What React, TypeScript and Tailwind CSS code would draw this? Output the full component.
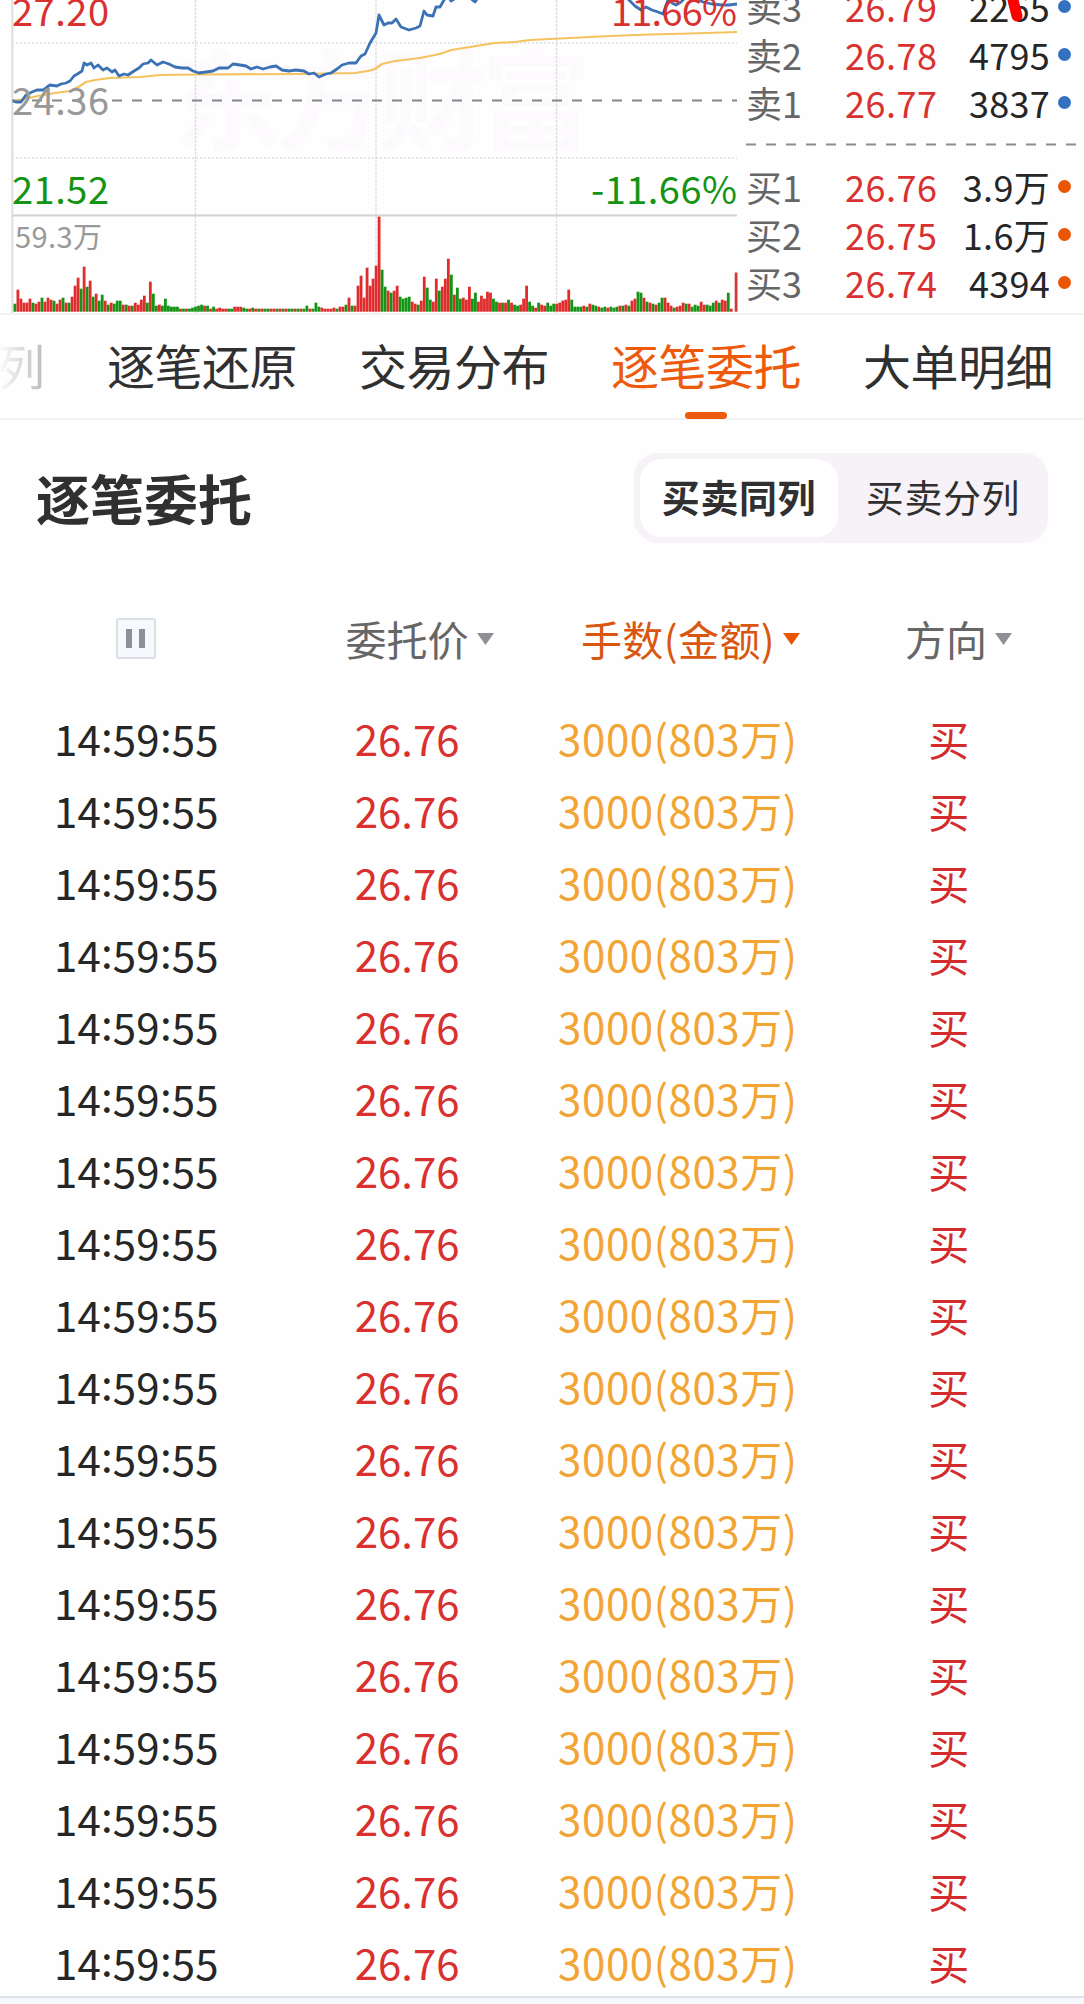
import { Fragment, useState } from 'react'
import clsx from 'clsx'

type Level = { label: string; price: string; volume: string }

const asks: Level[] = [
  { label: '卖3', price: '26.79', volume: '2265' },
  { label: '卖2', price: '26.78', volume: '4795' },
  { label: '卖1', price: '26.77', volume: '3837' },
]

const bids: Level[] = [
  { label: '买1', price: '26.76', volume: '3.9万' },
  { label: '买2', price: '26.75', volume: '1.6万' },
  { label: '买3', price: '26.74', volume: '4394' },
]

const tabs = ['逐笔还原', '交易分布', '逐笔委托', '大单明细']

const orders = Array.from({ length: 18 }, () => ({
  time: '14:59:55',
  price: '26.76',
  amount: '3000(803万)',
  side: '买',
}))

// one bar per minute, colour letter + height
const volumes = (
  'g8 r22 r13 r9 r9 r13 g9 r8 r10 g14 r10 r14 r12 g11 r8 r12 g14 r9 g9 r15 r26 r34 g23 r45 g25 r31 g15 r18 g11 g17 ' +
  'r11 g7 r9 g8 g11 g11 r7 g7 r6 g6 r9 r7 r12 r16 g9 r30 g18 g6 r7 g6 g13 g6 g5 g5 g5 r3 g3 r3 g3 g4 ' +
  'g5 g6 g7 r6 g6 r3 g5 r3 r4 r3 r3 g3 g3 r5 r5 r5 g4 g3 r3 g4 r3 g3 r3 g3 g3 r3 r3 g3 r3 g3 ' +
  'r3 g3 g3 r3 g3 r3 g3 g6 r3 g3 g9 g5 r4 r3 r3 r3 r4 g3 r5 r5 g7 r14 g6 r6 r26 r36 r14 r44 r26 r33 ' +
  'r46 r95 g42 g25 r21 g19 r21 r26 g15 g13 g14 g15 r10 r8 g7 r11 r35 g24 g12 r10 r33 g21 r25 r33 r53 g37 r17 g24 g13 r14 ' +
  'r12 r25 g13 g19 r10 r16 r13 r20 r19 g13 g10 r9 g9 r9 g12 r9 g7 g6 r7 r13 r26 g10 g6 r4 g9 r7 r6 g9 g6 g8 ' +
  'r8 r9 r11 r12 r22 g12 g5 g5 g5 r6 g5 r8 g7 g6 r5 g4 g5 r4 g5 g4 g5 r6 g6 r7 g6 r11 r13 g20 ' +
  'g19 r14 g10 r9 g8 r7 g9 g14 r14 r9 r6 g4 r5 r6 r9 g8 r8 g5 g7 g6 r10 r7 g7 g6 g9 r11 g9 r12 r11 g19 r3'
).split(' ')

const priceLine =
  '13,101 16,102 21,102 26,95 32,92 37,90 43,90 47,87 50,85 57,86 61,84 66,83 70,81 74,76 79,73 82,71 84,63 87,65 91,63 94,68 98,65 103,70 107,68 112,72 115,70 119,76 124,74 128,75 134,71 139,68 143,64 148,63 151,60 157,65 163,62 169,64 175,67 182,68 188,68 193,71 199,73 206,72 213,71 219,68 228,68 233,64 240,65 246,66 251,69 257,67 263,69 270,67 276,66 282,70 289,71 296,70 304,71 309,74 314,73 319,77 326,74 331,73 337,69 342,65 349,63 356,63 361,56 365,54 370,43 376,33 379,15 384,25 388,23 392,23 396,19 401,27 409,30 416,28 420,26 424,11 427,15 433,16 436,7 440,7 444,0 448,-4 451,1 456,-2 463,-3 470,-2 475,2 480,-5 560,-20 620,-8 629,0 635,6 641,10 646,7 652,10 658,12 663,14 668,0 672,3 676,5 681,2 686,-3 695,-2 703,2 712,4 722,5 729,5 737,4'

const averageLine =
  '13,101 24,99 38,96 55,93 70,91 80,86 86,82 95,80 110,78 140,77 160,75 200,74.5 300,74 355,73 368,71 375,69 382,64 395,61 420,58 435,55 443,53 451,50 470,47 495,43 515,42 530,40 570,38 610,36 650,34.5 690,33.5 737,32'

function PriceChart() {
  return (
    <svg width="744" height="313" viewBox="0 0 744 313" className="block shrink-0">
      <text x="172" y="142" fontSize="110" fontWeight="700" letterSpacing="-7" fill="#fdfafe">东方财富</text>
      <g stroke="#dedede" strokeWidth="1.3">
        <path d="M12 43H737M12 158H737" strokeDasharray="2 2" />
        <path d="M195.5 0V313M376 0V313M556.5 0V313" strokeDasharray="3 1" />
        <path d="M12.3 0V313" strokeWidth="2" />
        <path d="M12 215.5H737" stroke="#d2d2d2" strokeWidth="2" />
      </g>
      <path d="M12 100.4H737" stroke="#858585" strokeWidth="2" strokeDasharray="10 10" />
      <polyline points={averageLine} fill="none" stroke="#f4c35e" strokeWidth="2.2" strokeLinejoin="round" />
      <polyline points={priceLine} fill="none" stroke="#3a72b5" strokeWidth="2.8" strokeLinejoin="round" />
      {volumes.map((v, i) => {
        const h = Number(v.slice(1))
        return <rect key={i} x={13.5 + i * 3.01} y={311.7 - h} width="2.8" height={h} fill={v[0] === 'r' ? '#e02c2c' : '#149414'} />
      })}
      <rect x="734.7" y="272.5" width="2.8" height="39.2" fill="#d03a3a" />
      <g fontSize="38">
        <text x="12" y="26" fill="#d93030" textLength="97">27.20</text>
        <text x="12" y="115" fill="#999999" textLength="97">24.36</text>
        <text x="12" y="204" fill="#149414" textLength="97">21.52</text>
        <text x="611" y="26" fill="#d93030" textLength="126">11.66%</text>
        <text x="591" y="204" fill="#149414" textLength="146">-11.66%</text>
        <text x="15" y="248" fill="#999999" fontSize="29" textLength="87">59.3万</text>
      </g>
    </svg>
  )
}

function LevelRow({ level, dot }: { level: Level; dot: string }) {
  return (
    <div className="flex h-12 shrink-0 items-center pb-[2px] text-[36px] leading-[46px]">
      <span className="w-[99px] text-[#666]">{level.label}</span>
      <span className="w-[96px] tracking-[0.5px] text-[#d93030]">{level.price}</span>
      <span className="flex-1 text-right tracking-[0.3px] text-[#262626]">{level.volume}</span>
      <span className={clsx('ml-2 size-[13px] rounded-full', dot)} />
    </div>
  )
}

function OrderBook() {
  return (
    <div className="relative flex h-[313px] flex-1 flex-col justify-end overflow-hidden pr-[13px] pb-[6px] pl-[2px]">
      {asks.map((level) => (
        <LevelRow key={level.label} level={level} dot="bg-[#3272bf]" />
      ))}
      <svg width="331" height="36" className="shrink-0">
        <path d="M0 17.5H330" stroke="#8c8c8c" strokeWidth="2" strokeDasharray="10 10" />
      </svg>
      {bids.map((level) => (
        <LevelRow key={level.label} level={level} dot="bg-[#ea5504]" />
      ))}
      {/* hand-drawn mark over the third ask */}
      <svg width="40" height="24" className="absolute top-0 left-[256px]">
        <path d="M11 -8L17 16" stroke="#ff0000" strokeWidth="11" strokeLinecap="round" />
      </svg>
    </div>
  )
}

function Caret({ className }: { className: string }) {
  return (
    <svg width="17" height="12" viewBox="0 0 16 12" preserveAspectRatio="none" className={clsx('mt-px ml-2 shrink-0', className)}>
      <path d="M0 0H16L8 12Z" fill="currentColor" />
    </svg>
  )
}

function Time({ value }: { value: string }) {
  return (
    <span>
      {value.split(':').map((part, i) => (
        <Fragment key={i}>
          {i > 0 && <span className="relative -top-[4px]">:</span>}
          {part}
        </Fragment>
      ))}
    </span>
  )
}

function App() {
  const [tab, setTab] = useState('逐笔委托')
  const [view, setView] = useState('买卖同列')

  return (
    <div className="h-[2004px] w-[1084px] overflow-hidden bg-[#fefefe] font-['Noto_Sans_CJK_SC',sans-serif] text-[#303030]">
      <div className="flex h-[313px]">
        <PriceChart />
        <OrderBook />
      </div>

      <nav className="flex h-[107px] items-center border-y-2 border-[#f2f2f2] pb-[6px] text-[48px] leading-[60px] whitespace-nowrap">
        <span className="-ml-[3px] w-[110px] shrink-0 bg-linear-to-r from-white to-[#b8b8b8] to-45% bg-clip-text tracking-[-1px] text-transparent">列</span>
        {tabs.map((name) => (
          <button
            key={name}
            onClick={() => setTab(name)}
            className={clsx('relative mr-[62px] w-[190px] shrink-0 tracking-[-0.5px]', tab === name && 'text-[#ee5a0c]')}
          >
            {name}
            {tab === name && <span className="absolute -bottom-[25px] left-[74px] h-[7px] w-[42px] rounded-full bg-[#ee5a0c]" />}
          </button>
        ))}
      </nav>

      <div className="flex h-[155px] items-center justify-between pr-9 pl-9">
        <h1 className="text-[54px] leading-none font-bold">逐笔委托</h1>
        <div className="flex h-[90px] rounded-[24px] bg-[#f6f2f7] py-[6px] pl-[6px] text-[38px] tracking-[0.6px]">
          {['买卖同列', '买卖分列'].map((name, i) => (
            <button
              key={name}
              onClick={() => setView(name)}
              className={clsx('rounded-[22px] pb-1', i === 0 ? 'w-[198px]' : 'w-[210px]', view === name && 'bg-white font-bold')}
            >
              {name}
            </button>
          ))}
        </div>
      </div>

      <div className="grid h-[129px] grid-cols-4 items-center justify-items-center pb-[2px] text-[41px] text-[#666]">
        <button className="flex h-[41px] w-10 items-center justify-center gap-[7px] rounded-[3px] border-2 border-[#dcdee6] bg-[#f6f9fe]">
          <span className="h-[19px] w-[6px] bg-[#8e8f97]" />
          <span className="h-[19px] w-[6px] bg-[#8e8f97]" />
        </button>
        <span className="flex items-center pl-[26px]">委托价<Caret className="text-[#8e8f97]" /></span>
        <span className="flex items-center pl-[26px] tracking-[0.4px] text-[#d9560f]">手数(金额)<Caret className="text-[#ea5504]" /></span>
        <span className="flex items-center pl-5">方向<Caret className="text-[#8e8f97]" /></span>
      </div>

      <div className="h-[1292px] overflow-hidden text-[42px] leading-[67px]">
        {orders.map((order, i) => (
          <div key={i} className="grid h-[72px] grid-cols-4 justify-items-center pb-[5px] pl-px">
            <span className="tracking-[0.2px] text-[#262626]"><Time value={order.time} /></span>
            <span className="text-[#d93030]">{order.price}</span>
            <span className="tracking-[0.6px] text-[#f2a534]">{order.amount}</span>
            <span className="pt-px text-[41px] text-[#d42c2c]">{order.side}</span>
          </div>
        ))}
      </div>
      <div className="h-2 border-t-2 border-[#dfe2e8] bg-[#f5f9fe]" />
    </div>
  )
}

export default App
